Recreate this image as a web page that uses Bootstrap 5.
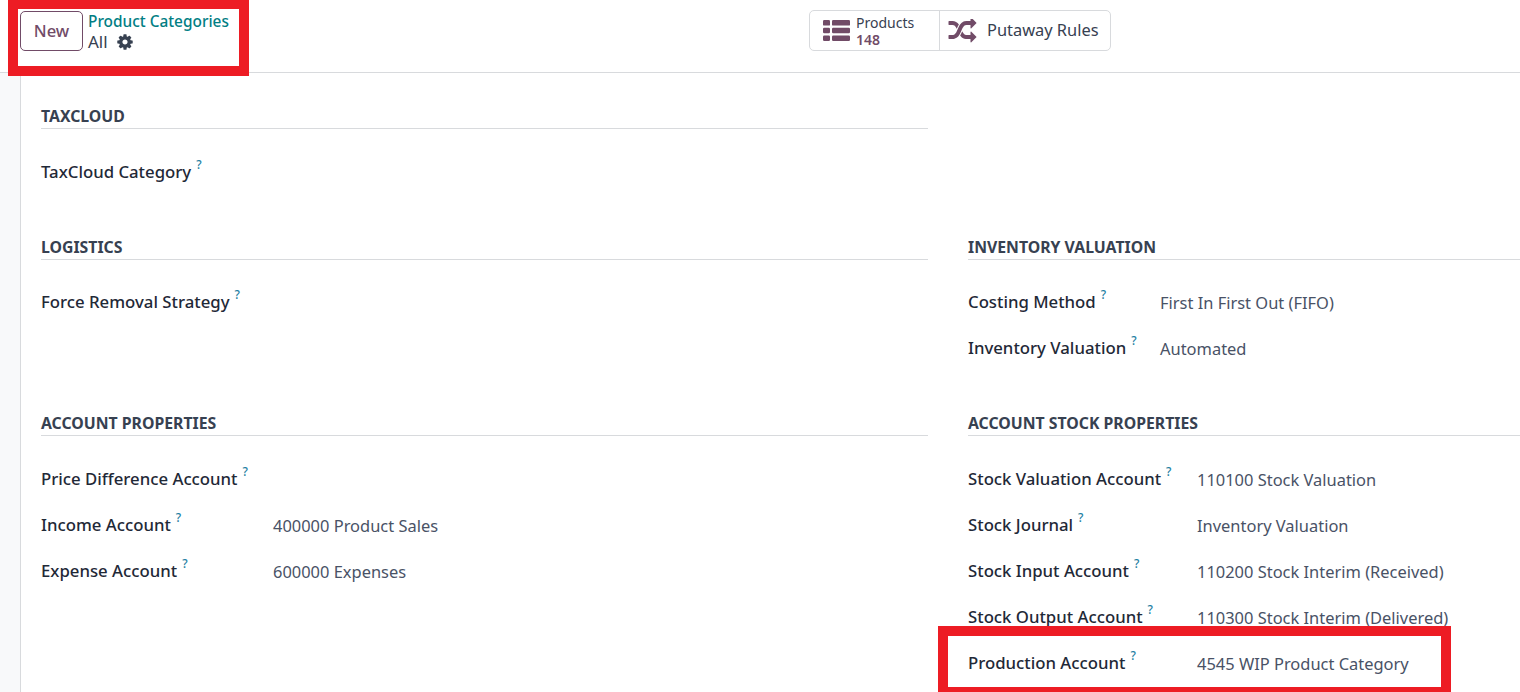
<!DOCTYPE html>
<html lang="en">
<head>
<meta charset="utf-8">
<title>Product Categories</title>
<link href="https://cdn.jsdelivr.net/npm/bootstrap@5.3.0/dist/css/bootstrap.min.css" rel="stylesheet">
<style>
html,body{height:692px;overflow:hidden;}
body{font-family:"Noto Sans","Open Sans",sans-serif;font-size:16px;color:#374151;background:#fff;position:relative;}
.cp{height:73px;border-bottom:1px solid #d8dadd;padding:11px 0 0 20px;}
.cp-left{width:789px;}
.btn-new{width:63px;height:40px;padding:0;border:1px solid #714b67;border-radius:5px;color:#714b67;font-size:16.6px;font-weight:500;background:#fff;}
.crumb{margin-left:5px;line-height:1;}
.crumb-top{color:#017e84;font-size:15.4px;font-weight:500;line-height:20px;padding-top:1px;}
.crumb-sub{font-size:17px;line-height:20px;color:#374151;}
.crumb-sub svg{width:18px;height:18px;margin-left:8px;vertical-align:-3px;fill:#374151;}
.stats{height:41px;margin-top:-1px;border:1px solid #d8dadd;border-radius:5px;width:302px;}
.stat{color:#374151;}
.stat-a{width:130px;padding-left:13px;border-right:1px solid #d8dadd;}
.stat-b{padding-left:8px;font-size:16.4px;}
.stat svg{fill:#714b67;flex:none;}
.stat-a svg{width:27px;height:21px;margin-right:6px;}
.stat-b svg{width:29px;height:24px;margin-right:10px;}
.stat-txt{font-size:14px;line-height:17px;}
.stat-txt b{display:block;color:#714b67;font-weight:600;}
.shell{height:619px;overflow:hidden;}
.rail{width:21px;flex:none;background:#f8f9fa;border-right:1px solid #d8dadd;}
.sheet{width:1499px;flex:none;padding-left:20px;}
.form-grid{display:grid;grid-template-columns:887px 552px;column-gap:40px;}
.sect{min-width:0;}
.sec-a{height:164px;padding-top:33px;}
.sec-b{height:176px;}
.sec-head{font-size:15.8px;font-weight:700;line-height:21px;height:23px;border-bottom:1px solid #d8dadd;text-transform:uppercase;color:#374151;margin-bottom:30px;}
.sec-b .sec-head{margin-bottom:29px;}
.fld{height:46px;display:flex;align-items:flex-start;line-height:26px;}
.fld-name{font-weight:500;color:#1f2937;font-size:16.75px;white-space:nowrap;}
.fld-val{font-size:16.45px;color:#495266;white-space:nowrap;padding-top:1px;}
.w232 .fld-name{width:232px;}
.w192 .fld-name{width:192px;}
.w229 .fld-name{width:229px;}
.hint{color:#1f7fa3;font-size:12px;font-weight:500;vertical-align:3px;line-height:0;margin-left:5px;}
.redbox{position:absolute;border:10px solid #ed1c24;pointer-events:none;}
.rb1{left:8px;top:-1px;width:241px;height:77px;}
.rb2{left:938px;top:626px;width:513px;height:71px;}
</style>
</head>
<body>
<header class="cp d-flex align-items-start">
  <div class="cp-left d-flex align-items-start">
    <button type="button" class="btn btn-new">New</button>
    <div class="crumb">
      <div class="crumb-top">Product Categories</div>
      <div class="crumb-sub">All<svg viewBox="0 0 1792 1792" aria-hidden="true"><path d="M1152 896q0-106-75-181t-181-75-181 75-75 181 75 181 181 75 181-75 75-181zm512-109v222q0 12-8 23t-20 13l-185 28q-19 54-39 91 35 50 107 138 10 12 10 25t-9 23q-27 37-99 108t-94 71q-12 0-26-9l-138-108q-44 23-91 38-16 136-29 186-7 28-36 28h-222q-14 0-24.5-8.5t-11.5-21.5l-28-184q-49-16-90-37l-141 107q-10 9-25 9-14 0-25-11-126-114-165-168-7-10-7-23 0-12 8-23 15-21 51-66.5t54-70.5q-27-50-41-99l-183-27q-13-2-21-12.5t-8-23.5v-222q0-12 8-23t19-13l186-28q14-46 39-92-40-57-107-138-10-12-10-24 0-10 9-23 26-36 98.5-107.5t94.5-71.5q13 0 26 10l138 107q44-23 91-38 16-136 29-186 7-28 36-28h222q14 0 24.5 8.5t11.5 21.5l28 184q49 16 90 37l142-107q9-9 24-9 13 0 25 10 129 119 165 170 7 8 7 22 0 12-8 23-15 21-51 66.5t-54 70.5q26 50 41 98l183 28q13 2 21 12.5t8 23.5z"/></svg></div>
    </div>
  </div>
  <div class="stats d-flex">
    <div class="stat stat-a d-flex align-items-center">
      <svg viewBox="0 0 27 21" aria-hidden="true"><rect x="0" y="0" width="7" height="5.6" rx="1.2"/><rect x="0" y="7.7" width="7" height="5.6" rx="1.2"/><rect x="0" y="15.4" width="7" height="5.6" rx="1.2"/><rect x="9" y="0" width="18" height="5.6" rx="1.2"/><rect x="9" y="7.7" width="18" height="5.6" rx="1.2"/><rect x="9" y="15.4" width="18" height="5.6" rx="1.2"/></svg>
      <div class="stat-txt">Products<b>148</b></div>
    </div>
    <div class="stat stat-b d-flex align-items-center">
      <svg viewBox="0 128 1792 1536" aria-hidden="true"><path d="M666 481q-60 92-137 273-22-45-37-72.5t-40.5-63.5-51-56.5-63-35-81.5-14.5h-224q-14 0-23-9t-9-23v-192q0-14 9-23t23-9h224q250 0 410 225zm1126 799q0 14-9 23l-320 320q-9 9-23 9-13 0-22.5-9.5t-9.5-22.5v-192q-32 0-85 .5t-81 1-73-1-71-5-64-10.5-63-18.5-58-28.5-59-40-55-53.5-56-69.5q59-93 136-273 22 45 37 72.5t40.5 63.5 51 56.5 63 35 81.5 14.5h256v-192q0-14 9-23t23-9q12 0 24 10l319 319q9 9 9 23zm0-896q0 14-9 23l-320 320q-9 9-23 9-13 0-22.5-9.5t-9.5-22.5v-192h-256q-48 0-87 15t-69 45-51 61.5-45 77.5q-32 62-78 171-29 66-49.5 111t-54 105-64 100-74 83-90 68.5-106.5 42-128 16.5h-224q-14 0-23-9t-9-23v-192q0-14 9-23t23-9h224q48 0 87-15t69-45 51-61.5 45-77.5q32-62 78-171 29-66 49.5-111t54-105 64-100 74-83 90-68.5 106.5-42 128-16.5h256v-192q0-14 9-23t23-9q12 0 24 10l319 319q9 9 9 23z"/></svg>
      <span>Putaway Rules</span>
    </div>
  </div>
</header>
<main class="shell d-flex">
  <div class="rail"></div>
  <div class="sheet">
    <div class="form-grid">
      <section class="sect sec-a">
        <div class="sec-head">TaxCloud</div>
        <div class="fld"><span class="fld-name">TaxCloud Category<sup class="hint">?</sup></span></div>
      </section>
      <section class="sect sec-a"></section>

      <section class="sect sec-b">
        <div class="sec-head">Logistics</div>
        <div class="fld"><span class="fld-name">Force Removal Strategy<sup class="hint">?</sup></span></div>
      </section>
      <section class="sect sec-b w192">
        <div class="sec-head">Inventory Valuation</div>
        <div class="fld"><span class="fld-name">Costing Method<sup class="hint">?</sup></span><span class="fld-val">First In First Out (FIFO)</span></div>
        <div class="fld"><span class="fld-name">Inventory Valuation<sup class="hint">?</sup></span><span class="fld-val">Automated</span></div>
      </section>

      <section class="sect w232">
        <div class="sec-head">Account Properties</div>
        <div class="fld"><span class="fld-name">Price Difference Account<sup class="hint">?</sup></span></div>
        <div class="fld"><span class="fld-name">Income Account<sup class="hint">?</sup></span><span class="fld-val">400000 Product Sales</span></div>
        <div class="fld"><span class="fld-name">Expense Account<sup class="hint">?</sup></span><span class="fld-val">600000 Expenses</span></div>
      </section>
      <section class="sect w229">
        <div class="sec-head">Account Stock Properties</div>
        <div class="fld"><span class="fld-name">Stock Valuation Account<sup class="hint">?</sup></span><span class="fld-val">110100 Stock Valuation</span></div>
        <div class="fld"><span class="fld-name">Stock Journal<sup class="hint">?</sup></span><span class="fld-val">Inventory Valuation</span></div>
        <div class="fld"><span class="fld-name">Stock Input Account<sup class="hint">?</sup></span><span class="fld-val">110200 Stock Interim (Received)</span></div>
        <div class="fld"><span class="fld-name">Stock Output Account<sup class="hint">?</sup></span><span class="fld-val">110300 Stock Interim (Delivered)</span></div>
        <div class="fld"><span class="fld-name">Production Account<sup class="hint">?</sup></span><span class="fld-val">4545 WIP Product Category</span></div>
      </section>
    </div>
  </div>
</main>
<div class="redbox rb1"></div>
<div class="redbox rb2"></div>
<script src="https://cdn.jsdelivr.net/npm/bootstrap@5.3.0/dist/js/bootstrap.bundle.min.js"></script>
</body>
</html>
